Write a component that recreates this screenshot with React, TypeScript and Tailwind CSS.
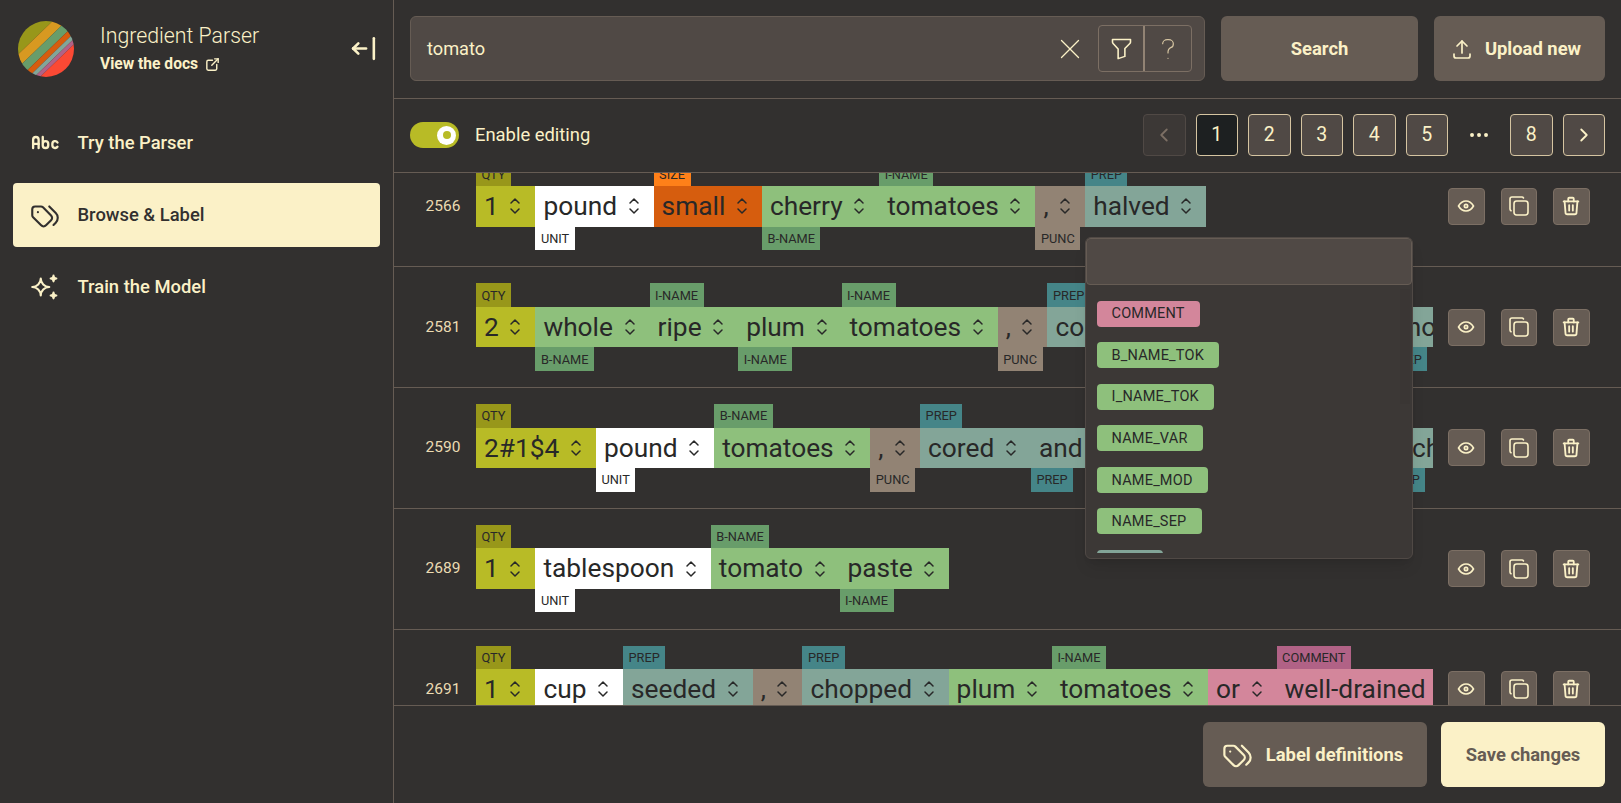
import {
  TbAbc,
  TbArrowBarLeft,
  TbChevronLeft,
  TbChevronRight,
  TbCopy,
  TbDots,
  TbExternalLink,
  TbEye,
  TbFilter,
  TbQuestionMark,
  TbSelector,
  TbSparkles,
  TbTags,
  TbTrash,
  TbUpload,
  TbX,
} from 'react-icons/tb';

type Kind = 'qty' | 'unit' | 'size' | 'name' | 'punc' | 'prep' | 'comment';
type Token = { word: string; label: string; kind: Kind; below?: boolean };

const tokenColors: Record<Kind, string> = {
  qty: 'bg-[#b8bb26]',
  unit: 'bg-white',
  size: 'bg-[#d65d0e]',
  name: 'bg-[#8ec07c]',
  punc: 'bg-[#928374]',
  prep: 'bg-[#83a598]',
  comment: 'bg-[#d3869b]',
};

const labelColors: Record<Kind, string> = {
  qty: 'bg-[#98971a]',
  unit: 'bg-white',
  size: 'bg-[#fe8019]',
  name: 'bg-[#689d6a]',
  punc: 'bg-[#928374]',
  prep: 'bg-[#458588]',
  comment: 'bg-[#b16286]',
};

const rows: { id: number; tokens: Token[] }[] = [
  {
    id: 2566,
    tokens: [
      { word: '1', label: 'QTY', kind: 'qty' },
      { word: 'pound', label: 'UNIT', kind: 'unit', below: true },
      { word: 'small', label: 'SIZE', kind: 'size' },
      { word: 'cherry', label: 'B-NAME', kind: 'name', below: true },
      { word: 'tomatoes', label: 'I-NAME', kind: 'name' },
      { word: ',', label: 'PUNC', kind: 'punc', below: true },
      { word: 'halved', label: 'PREP', kind: 'prep' },
    ],
  },
  {
    id: 2581,
    tokens: [
      { word: '2', label: 'QTY', kind: 'qty' },
      { word: 'whole', label: 'B-NAME', kind: 'name', below: true },
      { word: 'ripe', label: 'I-NAME', kind: 'name' },
      { word: 'plum', label: 'I-NAME', kind: 'name', below: true },
      { word: 'tomatoes', label: 'I-NAME', kind: 'name' },
      { word: ',', label: 'PUNC', kind: 'punc', below: true },
      { word: 'coarsely', label: 'PREP', kind: 'prep' },
      { word: 'and', label: 'PREP', kind: 'prep', below: true },
      { word: 'finely', label: 'PREP', kind: 'prep' },
      { word: 'shocked', label: 'PREP', kind: 'prep', below: true },
    ],
  },
  {
    id: 2590,
    tokens: [
      { word: '2#1$4', label: 'QTY', kind: 'qty' },
      { word: 'pound', label: 'UNIT', kind: 'unit', below: true },
      { word: 'tomatoes', label: 'B-NAME', kind: 'name' },
      { word: ',', label: 'PUNC', kind: 'punc', below: true },
      { word: 'cored', label: 'PREP', kind: 'prep' },
      { word: 'and', label: 'PREP', kind: 'prep', below: true },
      { word: 'cut', label: 'PREP', kind: 'prep' },
      { word: 'onto', label: 'PREP', kind: 'prep' },
      { word: '1/2', label: 'PREP', kind: 'prep' },
      { word: 'inch', label: 'PREP', kind: 'prep', below: true },
    ],
  },
  {
    id: 2689,
    tokens: [
      { word: '1', label: 'QTY', kind: 'qty' },
      { word: 'tablespoon', label: 'UNIT', kind: 'unit', below: true },
      { word: 'tomato', label: 'B-NAME', kind: 'name' },
      { word: 'paste', label: 'I-NAME', kind: 'name', below: true },
    ],
  },
  {
    id: 2691,
    tokens: [
      { word: '1', label: 'QTY', kind: 'qty' },
      { word: 'cup', label: 'UNIT', kind: 'unit', below: true },
      { word: 'seeded', label: 'PREP', kind: 'prep' },
      { word: ',', label: 'PUNC', kind: 'punc', below: true },
      { word: 'chopped', label: 'PREP', kind: 'prep' },
      { word: 'plum', label: 'B-NAME', kind: 'name', below: true },
      { word: 'tomatoes', label: 'I-NAME', kind: 'name' },
      { word: 'or', label: 'COMMENT', kind: 'comment', below: true },
      { word: 'well-drained', label: 'COMMENT', kind: 'comment' },
    ],
  },
];

const menuItems = [
  { name: 'COMMENT', color: 'bg-[#d3869b]' },
  { name: 'B_NAME_TOK', color: 'bg-[#8ec07c]' },
  { name: 'I_NAME_TOK', color: 'bg-[#8ec07c]' },
  { name: 'NAME_VAR', color: 'bg-[#8ec07c]' },
  { name: 'NAME_MOD', color: 'bg-[#8ec07c]' },
  { name: 'NAME_SEP', color: 'bg-[#8ec07c]' },
  { name: 'PREP', color: 'bg-[#83a598]' },
];

function Logo() {
  const stripes = [
    { y: -30, h: 14.5, fill: '#98971a' },
    { y: -15.5, h: 9.5, fill: '#d79921' },
    { y: -6, h: 8.3, fill: '#689d6a' },
    { y: 2.3, h: 5.7, fill: '#d65d0e' },
    { y: 8, h: 4, fill: '#83a598' },
    { y: 12, h: 4, fill: '#b16286' },
    { y: 16, h: 14, fill: '#fb4934' },
  ];
  return (
    <svg viewBox="0 0 56 56" className="w-[56px] h-[56px] shrink-0 rounded-full">
      <g transform="translate(28 28) rotate(-44)">
        {stripes.map((s) => (
          <rect key={s.fill} x="-42" y={s.y} width="84" height={s.h} fill={s.fill} />
        ))}
      </g>
    </svg>
  );
}

function TokenChip({ token }: { token: Token }) {
  return (
    <div className={`relative shrink-0 flex items-center h-[40.5px] pl-2 pr-2 gap-[4.6px] text-[26.3px] text-[#282828] ${tokenColors[token.kind]}`}>
      <span className="leading-none whitespace-nowrap">{token.word}</span>
      <TbSelector size={24} strokeWidth={1.5} className="shrink-0" />
      <span
        className={`absolute left-0 h-[23.5px] px-[5.5px] flex items-center text-[12.8px] text-[#282828] whitespace-nowrap ${labelColors[token.kind]} ${token.below ? 'top-full' : 'bottom-full'}`}
      >
        {token.label}
      </span>
    </div>
  );
}

function RowAction({ children }: { children: React.ReactNode }) {
  return (
    <button className="w-[36.5px] h-[37px] flex items-center justify-center rounded-[4px] bg-[#665c54] border border-[#7c6f64] text-[#fbf1c7]">
      {children}
    </button>
  );
}

function Row({ id, tokens }: { id: number; tokens: Token[] }) {
  return (
    <div className="h-[120.75px] shrink-0 flex items-center border-b-[1.5px] border-[#665c54]">
      <div className="w-[82px] shrink-0 pl-[31.5px] text-[15.5px] text-[#ebdbb2]">{id}</div>
      <div className="w-[956.5px] shrink-0 h-full flex items-center overflow-hidden">
        {tokens.map((t, i) => (
          <TokenChip key={i} token={t} />
        ))}
      </div>
      <div className="ml-[15.5px] flex gap-[16px]">
        <RowAction>
          <TbEye size={20} />
        </RowAction>
        <RowAction>
          <TbCopy size={24} strokeWidth={1.6} />
        </RowAction>
        <RowAction>
          <TbTrash size={22} />
        </RowAction>
      </div>
    </div>
  );
}

function PageButton({ children, active, disabled }: { children: React.ReactNode; active?: boolean; disabled?: boolean }) {
  let color = 'bg-[#504945] border-[#d5c4a1] text-[#fbf1c7]';
  if (active) color = 'bg-[#1d2021] border-[#d5c4a1] text-[#fbf1c7]';
  if (disabled) color = 'bg-[#3c3836] border-[#504945] text-[#7c6f64]';
  return (
    <button className={`w-[42.5px] h-[42.5px] flex items-center justify-center rounded-[4px] border-[1.5px] text-[19.5px] ${color}`}>
      {children}
    </button>
  );
}

export default function App() {
  return (
    <div className="flex h-screen w-screen overflow-hidden bg-[#32302f] text-[#fbf1c7] font-['Roboto',sans-serif]">
      {/* Sidebar */}
      <aside className="w-[394px] shrink-0 border-r-[1.5px] border-[#665c54] flex flex-col">
        <div className="h-[97px] flex items-center pl-[18px] pr-[14px]">
          <Logo />
          <div className="ml-[26px] flex flex-col gap-[7px]">
            <span className="text-[21.3px] leading-[25px] font-light">Ingredient Parser</span>
            <span className="flex items-center gap-[6px] text-[15.6px] leading-[19px] font-bold">
              View the docs
              <TbExternalLink size={17} />
            </span>
          </div>
          <TbArrowBarLeft size={31} className="ml-auto" />
        </div>
        <nav className="mt-[13.5px] px-[13px] flex flex-col gap-[7.5px]">
          <div className="h-[64.5px] flex items-center gap-[15.5px] pl-[15px] rounded-[4px] text-[18.4px] font-medium">
            <span className="w-[34px] flex justify-center">
              <TbAbc size={33} strokeWidth={1.7} />
            </span>
            Try the Parser
          </div>
          <div className="h-[64.5px] flex items-center gap-[15.5px] pl-[15px] rounded-[4px] text-[18.4px] font-medium bg-[#fbf1c7] text-[#32302f]">
            <TbTags size={34} strokeWidth={1.5} />
            Browse &amp; Label
          </div>
          <div className="h-[64.5px] flex items-center gap-[15.5px] pl-[15px] rounded-[4px] text-[18.4px] font-medium">
            <TbSparkles size={34} strokeWidth={1.5} />
            Train the Model
          </div>
        </nav>
      </aside>

      {/* Main */}
      <main className="relative flex-1 min-w-0 flex flex-col">
        <div className="h-[98.5px] shrink-0 border-b-[1.5px] border-[#665c54] flex items-center gap-[16px] px-[16px]">
          <div className="w-[795px] h-[65px] flex items-center rounded-[6px] bg-[#504945] border-[1.5px] border-[#665c54] pl-[16px] pr-[12px]">
            <span className="text-[18.2px]">tomato</span>
            <TbX size={34} strokeWidth={0.9} className="ml-auto" />
            <div className="ml-[11px] w-[94px] h-[47px] flex rounded-[4px] border-[1.5px] border-[#7c6f64]">
              <span className="w-[46px] flex items-center justify-center border-r-2 border-[#928374]">
                <TbFilter size={27} strokeWidth={1.4} />
              </span>
              <span className="flex-1 flex items-center justify-center text-[#d5c4a1]">
                <TbQuestionMark size={32} strokeWidth={0.9} />
              </span>
            </div>
          </div>
          <button className="w-[197px] h-[65px] rounded-[6px] bg-[#665c54] text-[18.4px] font-bold">Search</button>
          <button className="flex-1 h-[65px] rounded-[6px] bg-[#665c54] text-[18.4px] font-bold flex items-center justify-center gap-[11px] pr-[8px]">
            <TbUpload size={24} strokeWidth={1.7} />
            Upload new
          </button>
        </div>

        <div className="h-[74px] shrink-0 border-b-[1.5px] border-[#665c54] flex items-center px-[16px]">
          <div className="w-[49px] h-[26px] rounded-full bg-[#b8bb26] flex items-center justify-end pr-[3px]">
            <span className="w-[19px] h-[19px] rounded-full bg-white flex items-center justify-center">
              <span className="w-[8px] h-[8px] rounded-full bg-[#b8bb26]" />
            </span>
          </div>
          <span className="ml-[16px] text-[18.4px]">Enable editing</span>
          <div className="ml-auto flex items-center gap-[10px]">
            <PageButton disabled>
              <TbChevronLeft size={22} />
            </PageButton>
            <PageButton active>1</PageButton>
            <PageButton>2</PageButton>
            <PageButton>3</PageButton>
            <PageButton>4</PageButton>
            <PageButton>5</PageButton>
            <span className="w-[42px] flex items-center justify-center">
              <TbDots size={24} />
            </span>
            <PageButton>8</PageButton>
            <PageButton>
              <TbChevronRight size={22} />
            </PageButton>
          </div>
        </div>

        <div className="flex-1 min-h-0 overflow-hidden">
          <div className="-mt-[26px] flex flex-col">
            {rows.map((r) => (
              <Row key={r.id} id={r.id} tokens={r.tokens} />
            ))}
          </div>
        </div>

        <div className="h-[98px] shrink-0 border-t-[1.5px] border-[#665c54] flex items-center justify-end gap-[14px] px-[16px]">
          <button className="w-[224px] h-[65px] rounded-[6px] bg-[#665c54] text-[18.4px] font-bold flex items-center justify-center gap-[11px] pr-[7px]">
            <TbTags size={35} strokeWidth={1.5} />
            Label definitions
          </button>
          <button className="w-[164px] h-[65px] rounded-[6px] bg-[#fbf1c7] text-[#665c54] text-[18.4px] font-bold">Save changes</button>
        </div>

        {/* Label select dropdown */}
        <div className="absolute left-[691px] top-[237px] w-[328px] h-[322px] rounded-[6px] bg-[#3c3836] border-[1.5px] border-[#504945] shadow-lg overflow-hidden">
          <div className="h-[47px] rounded-[4px] bg-[#504945] border-[1.5px] border-[#665c54]" />
          <div className="relative h-[268px] overflow-hidden pt-[15.5px] pl-[11px] flex flex-col gap-[15.6px] items-start">
            <span className="absolute right-[2px] top-[4px] w-[10px] h-[115px] bg-[#3a3634]" />
            {menuItems.map((m) => (
              <span key={m.name} className={`shrink-0 h-[26px] pl-[14.5px] pr-[15.5px] pt-[1px] flex items-center rounded-[4px] text-[14.5px] tracking-[0.2px] text-[#282828] ${m.color}`}>
                {m.name}
              </span>
            ))}
          </div>
        </div>
      </main>
    </div>
  );
}
